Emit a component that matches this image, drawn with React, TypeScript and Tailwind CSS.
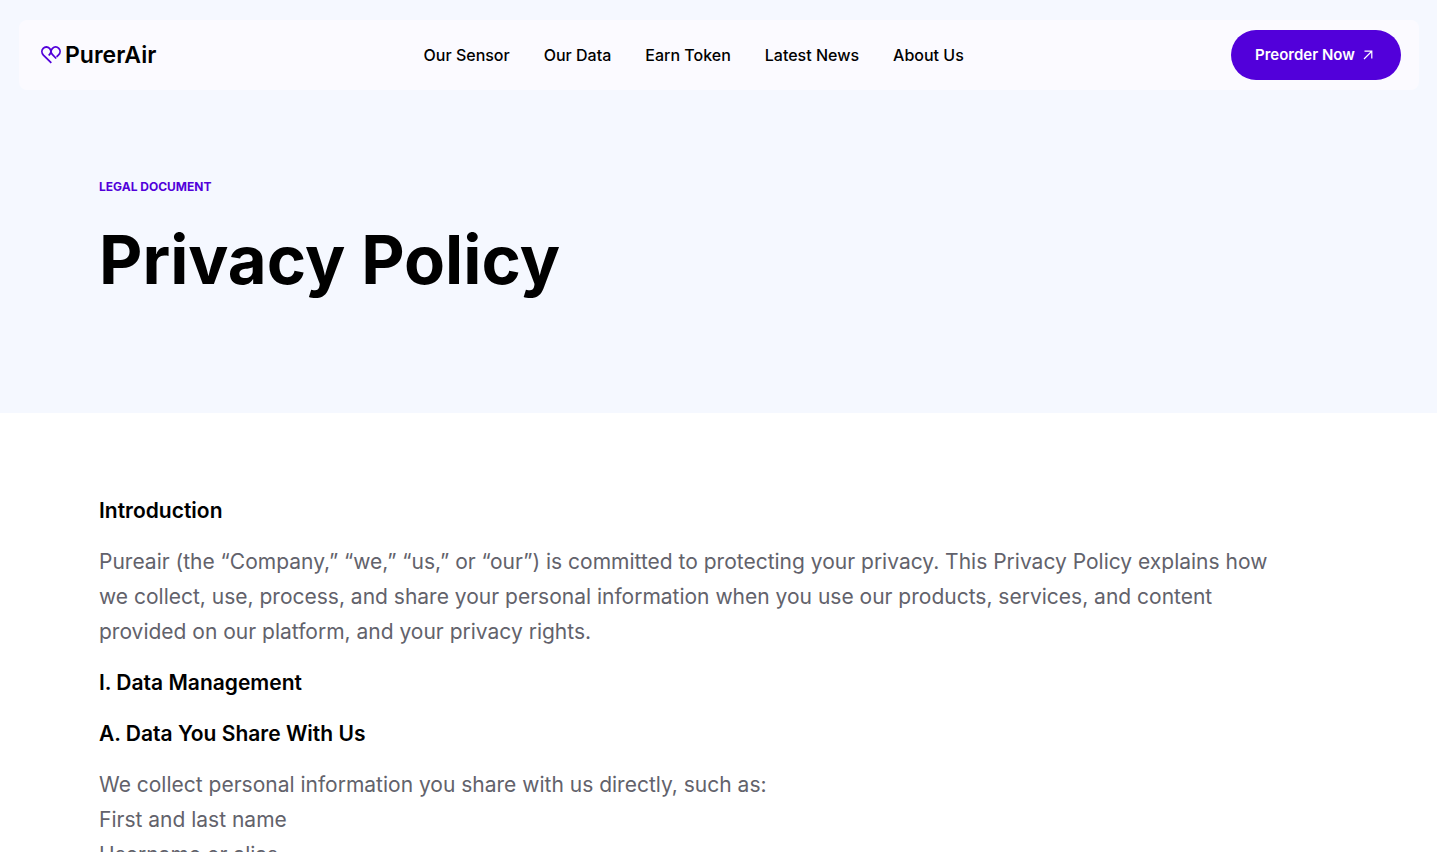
const navLinks = ["Our Sensor", "Our Data", "Earn Token", "Latest News", "About Us"];

const sections = [
  {
    title: "Introduction",
    lines: [
      "Pureair (the “Company,” “we,” “us,” or “our”) is committed to protecting your privacy. This Privacy Policy explains how we collect, use, process, and share your personal information when you use our products, services, and content provided on our platform, and your privacy rights.",
    ],
  },
  { title: "I. Data Management", lines: [] },
  {
    title: "A. Data You Share With Us",
    lines: [
      "We collect personal information you share with us directly, such as:",
      "First and last name",
      "Username or alias",
    ],
  },
];

const LogoMark = () => (
  <svg width="20" height="18" viewBox="0 0 20 18" fill="none" aria-hidden="true">
    <path
      d="M10.300 16.800 2.400 9.100C.5 7 .4 4.100 2.200 2.300s4.600-1.700 6.300 0c1.700 1.800 1.700 4.400 0 6.300L7.600 9.400M15.600 10.900l2-2c1.900-1.900 1.900-4.800.2-6.600-1.800-1.800-4.500-1.800-6.300 0s-1.800 4.400 0 6.300l3.700 3.900"
      stroke="#5200da"
      strokeWidth="1.800"
    />
  </svg>
);

const ArrowIcon = () => (
  <svg width="10" height="10" viewBox="0 0 10 10" fill="none" aria-hidden="true">
    <path d="M1 9 8.500 1.500M1.500 1.200h7.300v7.300" stroke="currentColor" strokeWidth="1.200" />
  </svg>
);

const Header = () => (
  <header className="flex items-center justify-between bg-[#fbfaff] rounded-lg pl-[22px] pr-[18px] py-[10px]">
    <a href="#" className="flex items-center gap-1 text-[23px] leading-8 font-semibold">
      <LogoMark />
      PurerAir
    </a>
    <nav className="flex gap-[34px] text-base font-medium">
      {navLinks.map((link) => (
        <a key={link} href="#">
          {link}
        </a>
      ))}
    </nav>
    <button
      type="button"
      className="flex items-center gap-2 w-[170px] h-[50px] pl-6 rounded-full bg-[#5200da] text-white text-[15px] font-semibold cursor-pointer"
    >
      Preorder Now
      <ArrowIcon />
    </button>
  </header>
);

const App = () => {
  return (
    <div className="min-h-screen bg-white text-black font-['Inter',sans-serif]">
      <div className="bg-[#f5f8ff] pl-[19px] pr-[18px] pt-5 pb-[108px]">
        <Header />
        <div className="px-20 pt-[89px]">
          <p className="text-xs leading-4 font-bold text-[#5200da]">LEGAL DOCUMENT</p>
          <h1 className="mt-5 text-[67px] leading-[90px] font-bold">Privacy Policy</h1>
        </div>
      </div>

      <main className="px-[99px] py-20 text-[21px] leading-[35px]">
        <div className="flex flex-col gap-4 max-w-[1190px]">
          {sections.map(({ title, lines }) => (
            <section key={title} className="flex flex-col gap-4">
              <h2 className="font-semibold">{title}</h2>
              {lines.length > 0 && (
                <div className="text-[#62626b]">
                  {lines.map((line) => (
                    <p key={line}>{line}</p>
                  ))}
                </div>
              )}
            </section>
          ))}
        </div>
      </main>
    </div>
  );
};

export default App;
